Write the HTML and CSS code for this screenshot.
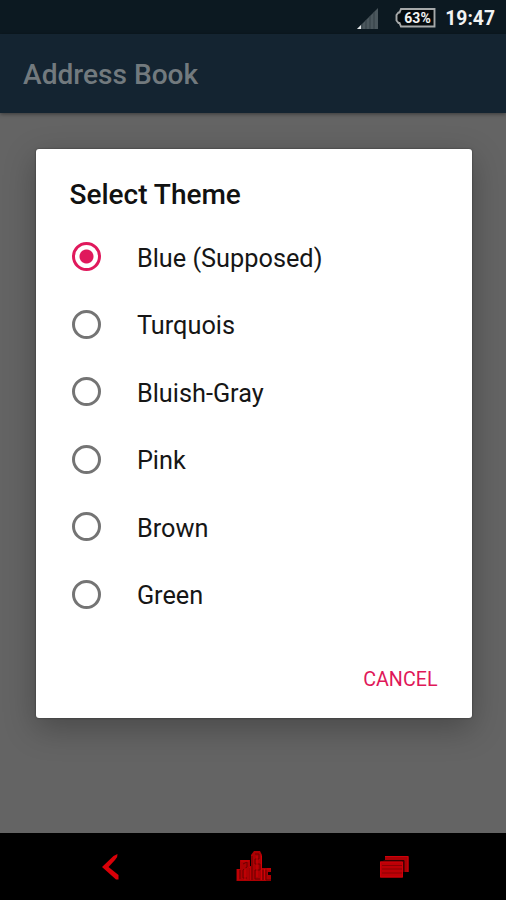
FILE: index.html
```html
<!DOCTYPE html>
<html lang="en">
<head>
<meta charset="utf-8">
<title>Address Book</title>
<link rel="stylesheet" href="styles.css">
</head>
<body>
<div class="status">
  <svg class="signal" width="22" height="22" viewBox="0 0 22 22"><path d="M21 1V22H0Z" fill="#4b575d"/><path d="M5 17v5M9 13v9M13 9v13M17 5v17" stroke="#344047"/><path d="M4 18v4H0Z" fill="#e4e7e8"/></svg>
  <div class="battery">
    <svg width="41" height="20" viewBox="0 0 41 20"><path d="M6 1H39.500V18.500H6L4.500 15H3.500L1.500 12.500V7L3.500 4.500H4.500Z" fill="#050b0e" stroke="#a6a9aa" stroke-width="1.900"/></svg>
    <span class="percent">63%</span>
  </div>
  <span class="clock">19:47</span>
</div>
<header class="appbar">Address Book</header>
<main class="content">
  <section class="dialog">
    <h1 class="title">Select Theme</h1>
    <div class="options">
      <label class="option"><span class="radio checked"></span>Blue (Supposed)</label>
      <label class="option"><span class="radio"></span>Turquois</label>
      <label class="option"><span class="radio"></span>Bluish-Gray</label>
      <label class="option"><span class="radio"></span>Pink</label>
      <label class="option"><span class="radio"></span>Brown</label>
      <label class="option"><span class="radio"></span>Green</label>
    </div>
    <button class="cancel">CANCEL</button>
  </section>
</main>
<nav class="nav">
  <svg width="50" height="55" viewBox="90 840 50 55"><path d="M117.500 854Q118 857 115 860L108.500 867L118.500 875V879.500H116L102 867L113.500 856Z" fill="#d90008"/></svg>
  <svg width="70" height="55" viewBox="220 840 70 55">
    <path d="M236.500 869H240V860H250V866H251V855L254 851H260L262 855V868H271V872H268V875H271V881H236.500Z" fill="#ad0003"/>
    <path d="M240 870V879M243 864L247 862V867L243 870V878H247M249.500 868V880M252 856V880M255 854H259V859H255V864H260V870H255V879H260M263 870V880M266 870V880H271" fill="none" stroke="#6b0000"/>
    <path d="M238 869V880M241 861H249M250 867V880M261.500 856V880M257 856V877M245 868V880M264.500 869V880M267 869H271" fill="none" stroke="#d20006"/>
  </svg>
  <svg width="60" height="55" viewBox="365 840 60 55">
    <path d="M385 856H408.500V872H403.500V861H385Z" fill="#a90005"/>
    <path d="M380 861.500H403V877.500H380Z" fill="#bd0006"/>
    <path d="M382 865.500H402M382 869H402M382 873H402" stroke="#8b0003"/>
    <path d="M380.500 862H402.500V877H380.500ZM385 856.500H408V872" fill="none" stroke="#d0000a"/>
    <path d="M383.500 860.500H404V872" fill="none" stroke="#300"/>
  </svg>
</nav>
</body>
</html>
```
FILE: styles.css
```css
* { box-sizing: border-box; }
body {
  margin: 0;
  width: 506px;
  height: 900px;
  display: flex;
  flex-direction: column;
  overflow: hidden;
  background: #646464;
  font-family: Roboto, sans-serif;
}
.status {
  height: 34px;
  flex: none;
  display: flex;
  align-items: center;
  justify-content: flex-end;
  padding: 2px 11px 0 0;
  background: #0c1921;
  color: #f2f3f3;
}
.signal { margin-right: 16px; }
.battery { position: relative; width: 41px; height: 20px; margin-right: 9px; }
.percent {
  position: absolute;
  left: 9px;
  top: 2px;
  font-size: 14px;
  line-height: 16px;
  font-weight: 700;
}
.clock { padding-top: 2px; font-size: 19.300px; line-height: 24px; font-weight: 700; }
.appbar {
  height: 79px;
  flex: none;
  padding: 2px 0 0 23px;
  background: #142431;
  color: #727a7e;
  font-size: 28.100px;
  line-height: 78px;
  font-weight: 500;
  box-shadow: 0 1px 4px rgba(0, 0, 0, .45);
}
.content { flex: 1; padding: 35.500px 34.500px 0 35.500px; }
.dialog {
  height: 569.500px;
  display: flex;
  flex-direction: column;
  background: #fff;
  border-radius: 3px;
  box-shadow: 0 0 2px rgba(0, 0, 0, .5), 0 10px 32px rgba(0, 0, 0, .28);
}
.title {
  margin: 0;
  padding: 28px 0 0 34px;
  font-size: 28px;
  line-height: 35px;
  font-weight: 500;
  color: #111;
}
.options { padding: 13px 0 0 36px; }
.option {
  height: 67.500px;
  display: flex;
  align-items: center;
  gap: 36.400px;
  font-size: 25.300px;
  color: #161616;
}
.radio {
  width: 29px;
  height: 29px;
  flex: none;
  margin-top: -3px;
  border: 3px solid #747474;
  border-radius: 50%;
}
.checked {
  border-color: #e0195c;
  background: radial-gradient(circle, #e0195c 6.500px, transparent 7.500px);
}
.cancel {
  align-self: flex-end;
  margin: 38.500px 34px 0 0;
  padding: 0;
  border: 0;
  background: none;
  color: #df1859;
  font: 400 19.700px/24px Roboto, sans-serif;
}
.nav {
  height: 67px;
  flex: none;
  display: flex;
  gap: 80px;
  padding: 7px 0 0 90px;
  background: #000;
}
.nav svg:last-child { margin-left: -5px; }
```
